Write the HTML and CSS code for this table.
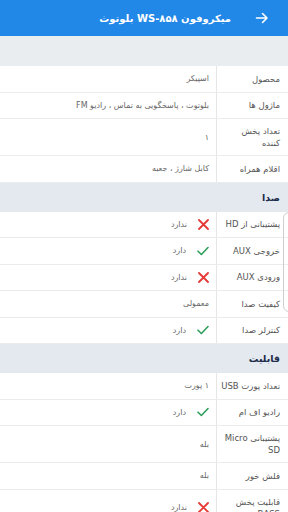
FILE: index.html
```html
<!DOCTYPE html>
<html lang="fa" dir="rtl">
<head>
<meta charset="utf-8">
<link rel="stylesheet" href="styles.css">
</head>
<body>
<header class="topbar">
  <span class="back">
    <svg width="14" height="14" viewBox="0 0 14 14"><path d="M1.5 7h10.5M7.5 2.5L12 7l-4.5 4.5" fill="none" stroke="#fff" stroke-width="1.6" stroke-linecap="round" stroke-linejoin="round"/></svg>
  </span>
  <h1 class="title">میکروفون WS-۸۵۸ بلوتوث</h1>
</header>
<div class="spacer"></div>
<main class="specs">
  <div class="row"><div class="label">محصول</div><div class="value">اسپیکر</div></div>
  <div class="row"><div class="label">ماژول ها</div><div class="value">بلوتوث ، پاسخگویی به تماس ، رادیو FM</div></div>
  <div class="row tall"><div class="label">تعداد پخش کننده</div><div class="value">۱</div></div>
  <div class="row"><div class="label">اقلام همراه</div><div class="value">کابل شارژ ، جعبه</div></div>

  <div class="section">صدا</div>
  <div class="row"><div class="label">پشتیبانی از HD</div><div class="value"><span class="ico"><svg width="11" height="11" viewBox="0 0 11 11"><path d="M1 1l9 9M10 1l-9 9" stroke="#e53935" stroke-width="1.8" stroke-linecap="round"/></svg></span>ندارد</div></div>
  <div class="row"><div class="label">خروجی AUX</div><div class="value"><span class="ico"><svg width="12" height="10" viewBox="0 0 12 10"><path d="M1 5.2l3.4 3.3L11 1.5" fill="none" stroke="#2e9e5b" stroke-width="1.6" stroke-linecap="round" stroke-linejoin="round"/></svg></span>دارد</div></div>
  <div class="row"><div class="label">ورودی AUX</div><div class="value"><span class="ico"><svg width="11" height="11" viewBox="0 0 11 11"><path d="M1 1l9 9M10 1l-9 9" stroke="#e53935" stroke-width="1.8" stroke-linecap="round"/></svg></span>ندارد</div></div>
  <div class="row"><div class="label">کیفیت صدا</div><div class="value">معمولی</div></div>
  <div class="row"><div class="label">کنترلر صدا</div><div class="value"><span class="ico"><svg width="12" height="10" viewBox="0 0 12 10"><path d="M1 5.2l3.4 3.3L11 1.5" fill="none" stroke="#2e9e5b" stroke-width="1.6" stroke-linecap="round" stroke-linejoin="round"/></svg></span>دارد</div></div>

  <div class="section">قابلیت</div>
  <div class="row"><div class="label">تعداد پورت USB</div><div class="value">۱ پورت</div></div>
  <div class="row"><div class="label">رادیو اف ام</div><div class="value"><span class="ico"><svg width="12" height="10" viewBox="0 0 12 10"><path d="M1 5.2l3.4 3.3L11 1.5" fill="none" stroke="#2e9e5b" stroke-width="1.6" stroke-linecap="round" stroke-linejoin="round"/></svg></span>دارد</div></div>
  <div class="row tall"><div class="label">پشتیبانی Micro SD</div><div class="value">بله</div></div>
  <div class="row"><div class="label">فلش خور</div><div class="value">بله</div></div>
  <div class="row tall"><div class="label">قابلیت پخش BASS</div><div class="value"><span class="ico"><svg width="11" height="11" viewBox="0 0 11 11"><path d="M1 1l9 9M10 1l-9 9" stroke="#e53935" stroke-width="1.8" stroke-linecap="round"/></svg></span>ندارد</div></div>
</main>
<div class="handle"></div>
</body>
</html>
```
FILE: styles.css
```css
* { box-sizing: border-box; }
html, body { margin: 0; padding: 0; }
body {
  width: 288px;
  height: 512px;
  overflow: hidden;
  position: relative;
  background: #fff;
  font-family: "DejaVu Sans", "Noto Sans", sans-serif;
  direction: rtl;
  color: #555;
}
.topbar {
  height: 36px;
  background: #2288e8;
  display: flex;
  align-items: center;
  padding-right: 19px;
  position: relative;
  z-index: 1;
}
.back { display: flex; width: 14px; height: 14px; flex: none; }
.title {
  margin: 0 24px 0 0;
  font-size: 10px;
  font-weight: bold;
  color: #fff;
  white-space: nowrap;
}
.spacer { height: 30px; background: #e9edf0; }
.specs { display: flex; flex-direction: column; }
.row {
  display: flex;
  min-height: 26.5px;
  border-bottom: 1px solid #ececec;
}
.row.tall { min-height: 37px; }
.label {
  width: 72px;
  flex: none;
  padding: 5px 8px 5px 4px;
  border-left: 1px solid #e6e6e6;
  font-size: 8.5px;
  line-height: 12px;
  color: #555;
  display: flex;
  align-items: center;
}
.value {
  flex: 1;
  padding: 0 7px;
  display: flex;
  align-items: center;
  gap: 11px;
  font-size: 8px;
  color: #666;
}
.ico { display: flex; }
.section {
  height: 29px;
  background: #e3e9ef;
  display: flex;
  align-items: center;
  padding-right: 8px;
  font-size: 9.5px;
  font-weight: bold;
  color: #1c2b4a;
}
.handle {
  position: absolute;
  top: 212px;
  right: -10px;
  width: 15px;
  height: 100px;
  border: 1px solid #cfcfcf;
  border-radius: 6px;
}
```
